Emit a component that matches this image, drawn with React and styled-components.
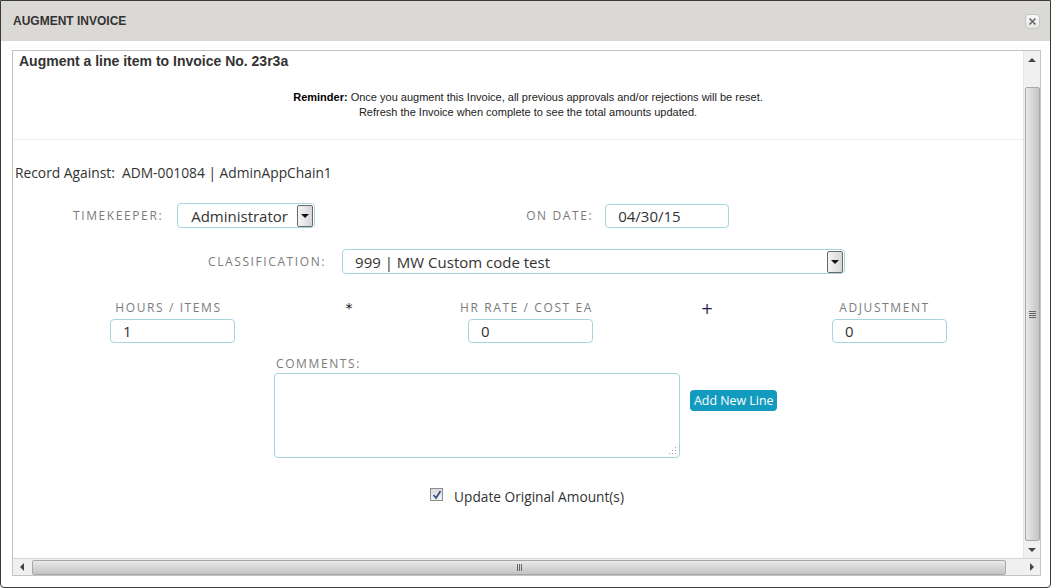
import React from 'react';
import styled, { createGlobalStyle } from 'styled-components';

const GlobalStyle = createGlobalStyle`
  html, body {
    margin: 0;
    padding: 0;
    background: #ffffff;
  }
  * {
    box-sizing: border-box;
  }
`;

const Dialog = styled.div`
  width: 1051px;
  height: 588px;
  border: 1px solid #3a3a3a;
  border-radius: 0 0 4px 4px;
  background: #fff;
  display: flex;
  flex-direction: column;
  overflow: hidden;
`;

const TitleBar = styled.header`
  height: 40px;
  flex-shrink: 0;
  background: #dbd9d5;
  display: flex;
  align-items: center;
  justify-content: space-between;
  padding: 0 10px 0 12px;
`;

const Title = styled.h2`
  margin: 0;
  font-family: "Liberation Sans", Arial, sans-serif;
  font-size: 12px;
  font-weight: bold;
  color: #333;
`;

const CloseButton = styled.button`
  width: 15px;
  height: 15px;
  padding: 0;
  border: 1px solid #c4c4c4;
  border-radius: 4px;
  background: linear-gradient(#fafafa, #e6e6e6);
  display: flex;
  align-items: center;
  justify-content: center;
`;

const Body = styled.div`
  flex: 1;
  padding: 9px 9px 11px 11px;
  display: flex;
`;

const ScrollPanel = styled.div`
  flex: 1;
  border: 1px solid #c9c1c1;
  display: grid;
  grid-template-columns: 1fr 17px;
  grid-template-rows: 1fr 17px;
  overflow: hidden;
`;

const Viewport = styled.div`
  overflow: hidden;
  position: relative;
`;

const Content = styled.div`
  width: 1030px;
`;

const Heading = styled.div`
  padding: 2px 0 0 6px;
  font-family: "Liberation Sans", Arial, sans-serif;
  font-size: 14px;
  font-weight: bold;
  line-height: 16px;
  color: #333;
`;

const Reminder = styled.div`
  margin-top: 21px;
  padding-bottom: 19px;
  border-bottom: 1px solid #ececec;
  text-align: center;
  font-family: "Liberation Sans", Arial, sans-serif;
  font-size: 11px;
  line-height: 15px;
  color: #222;
  b {
    color: #000;
  }
`;

const Form = styled.div`
  font-family: "Open Sans", sans-serif;
  color: #333;
`;

const RecordLine = styled.div`
  margin-top: 24px;
  padding-left: 2px;
  font-size: 13.8px;
  line-height: 18px;
`;

const Row = styled.div`
  display: flex;
  align-items: center;
  margin-top: ${p => p.$top || 21}px;
  padding-left: ${p => p.$left || 0}px;
`;

const Label = styled.label`
  font-size: 12px;
  letter-spacing: 1.6px;
  text-transform: uppercase;
  color: #7b7b7b;
  line-height: 16px;
  margin-right: ${p => p.$gap || 0}px;
`;

const SelectBox = styled.div`
  width: ${p => p.$width}px;
  height: 25px;
  border: 1px solid #a7d4df;
  border-radius: 4px;
  display: flex;
  align-items: center;
  justify-content: space-between;
  padding: 0 1px 0 ${p => p.$pad || 13}px;
  font-size: 15px;
  color: #333;
`;

const DropButton = styled.span`
  width: 16px;
  height: 22px;
  border: 1px solid #6a6a6a;
  border-radius: 2px;
  background: linear-gradient(90deg, #f4f4f4, #d6d6d6);
  display: flex;
  align-items: center;
  justify-content: center;
  &::after {
    content: '';
    border-left: 4px solid transparent;
    border-right: 4px solid transparent;
    border-top: 4px solid #111;
  }
`;

const TextInput = styled.div`
  width: ${p => p.$width}px;
  height: ${p => p.$height || 24}px;
  margin-left: ${p => p.$shift || 0}px;
  border: 1px solid #a7d4df;
  border-radius: 4px;
  padding: 0 12px;
  display: flex;
  align-items: center;
  font-size: 15px;
  color: #333;
`;

const Spacer = styled.div`
  width: ${p => p.$width}px;
`;

const AmountGrid = styled.div`
  display: grid;
  grid-template-columns: repeat(5, 179px);
  margin-top: 26px;
  padding-left: 66px;
`;

const AmountCell = styled.div`
  display: flex;
  flex-direction: column;
  align-items: center;
  gap: 3px;
`;

const Operator = styled.div`
  text-align: center;
  font-family: "DejaVu Sans", sans-serif;
  font-size: ${p => p.$size || 14}px;
  line-height: 16px;
  padding-top: ${p => p.$top || 0}px;
  padding-left: 3px;
  color: #${p => p.$color || '111'};
`;

const CommentBlock = styled.div`
  display: flex;
  flex-direction: column;
  gap: 1px;
`;

const CommentArea = styled.div`
  width: 406px;
  height: 85px;
  border: 1px solid #a7d4df;
  border-radius: 4px;
  position: relative;
`;

const ResizeGrip = styled.svg`
  position: absolute;
  right: 2px;
  bottom: 2px;
`;

const AddButton = styled.button`
  margin: 34px 0 0 10px;
  align-self: flex-start;
  height: 21px;
  padding: 0 4px;
  border: none;
  border-radius: 4px;
  background: #139bbf;
  color: #fff;
  font-family: "Open Sans", sans-serif;
  font-size: 12.4px;
  line-height: 21px;
`;

const CheckRow = styled.div`
  display: flex;
  align-items: center;
  justify-content: center;
  margin-top: 30px;
  padding-right: 2px;
  gap: 11px;
  font-size: 13.7px;
  line-height: 18px;
`;

const CheckBox = styled.span`
  width: 13px;
  height: 13px;
  margin-top: -5px;
  border: 1px solid #8d8d8d;
  background: linear-gradient(#dcdcdc, #f4f4f4);
  display: flex;
  align-items: center;
  justify-content: center;
`;

const VScroll = styled.div`
  background: #f0f0f0;
  border-left: 1px solid #e6e6e6;
  display: flex;
  flex-direction: column;
  align-items: center;
`;

const HScroll = styled.div`
  grid-column: 1 / 3;
  background: #f0f0f0;
  border-top: 1px solid #d6d6d6;
  display: flex;
  align-items: center;
`;

const Arrow = styled.span`
  width: 17px;
  height: 17px;
  flex-shrink: 0;
  display: flex;
  align-items: center;
  justify-content: center;
  &::after {
    content: '';
    ${p => p.$dir === 'up' && 'border-left: 4px solid transparent; border-right: 4px solid transparent; border-bottom: 4px solid #444;'}
    ${p => p.$dir === 'down' && 'border-left: 4px solid transparent; border-right: 4px solid transparent; border-top: 4px solid #444;'}
    ${p => p.$dir === 'left' && 'border-top: 4px solid transparent; border-bottom: 4px solid transparent; border-right: 4px solid #444;'}
    ${p => p.$dir === 'right' && 'border-top: 4px solid transparent; border-bottom: 4px solid transparent; border-left: 4px solid #444;'}
  }
`;

const VThumb = styled.div`
  width: 15px;
  margin-top: 19px;
  flex: 1;
  border: 1px solid #a8a8a8;
  border-radius: 2px;
  background: linear-gradient(90deg, #eaeaea, #d2d2d2 60%, #c4c4c4);
  display: flex;
  align-items: center;
  justify-content: center;
`;

const HThumb = styled.div`
  height: 15px;
  flex: 1;
  margin: 0 17px 0 2px;
  border: 1px solid #a8a8a8;
  border-radius: 2px;
  background: linear-gradient(#eaeaea, #d2d2d2 60%, #c4c4c4);
  display: flex;
  align-items: center;
  justify-content: center;
`;

const Grip = styled.span`
  display: flex;
  flex-direction: ${p => (p.$vertical ? 'column' : 'row')};
  gap: 1px;
  span {
    background: #666;
    ${p => (p.$vertical ? 'width: 7px; height: 1px;' : 'width: 1px; height: 7px;')}
  }
`;

function App() {
  return (
    <>
      <GlobalStyle />
      <Dialog>
        <TitleBar>
          <Title>AUGMENT INVOICE</Title>
          <CloseButton aria-label="close">
            <svg width="9" height="9" viewBox="0 0 9 9">
              <path d="M1.5 1.5 L7.5 7.5 M7.5 1.5 L1.5 7.5" stroke="#666" strokeWidth="1.6" />
            </svg>
          </CloseButton>
        </TitleBar>
        <Body>
          <ScrollPanel>
            <Viewport>
              <Content>
                <Heading>Augment a line item to Invoice No. 23r3a</Heading>
                <Reminder>
                  <b>Reminder:</b> Once you augment this Invoice, all previous approvals and/or rejections will be reset.
                  <br />
                  Refresh the Invoice when complete to see the total amounts updated.
                </Reminder>
                <Form>
                  <RecordLine>Record Against:&nbsp; ADM-001084 | AdminAppChain1</RecordLine>
                  <Row $left={60}>
                    <Label $gap={14}>Timekeeper:</Label>
                    <SelectBox $width={138}>
                      Administrator
                      <DropButton />
                    </SelectBox>
                    <Spacer $width={211} />
                    <Label $gap={12}>On Date:</Label>
                    <TextInput $width={124}>04/30/15</TextInput>
                  </Row>
                  <Row $left={195}>
                    <Label $gap={16}>Classification:</Label>
                    <SelectBox $width={503} $pad={12}>
                      999 | MW Custom code test
                      <DropButton />
                    </SelectBox>
                  </Row>
                  <AmountGrid>
                    <AmountCell>
                      <Label>Hours / Items</Label>
                      <TextInput $width={125} $shift={8}>1</TextInput>
                    </AmountCell>
                    <Operator>*</Operator>
                    <AmountCell>
                      <Label>Hr Rate / Cost EA</Label>
                      <TextInput $width={125} $shift={8}>0</TextInput>
                    </AmountCell>
                    <Operator $top={1} $size={15} $color="2a1a4a">+</Operator>
                    <AmountCell>
                      <Label>Adjustment</Label>
                      <TextInput $width={115} $shift={10}>0</TextInput>
                    </AmountCell>
                  </AmountGrid>
                  <Row $top={13} $left={261}>
                    <CommentBlock>
                      <Label style={{ paddingLeft: 2 }}>Comments:</Label>
                      <CommentArea>
                        <ResizeGrip width="9" height="9" viewBox="0 0 9 9">
                          <g fill="#a0a0a0">
                            <rect x="7" y="1" width="1" height="1" />
                            <rect x="4" y="4" width="1" height="1" />
                            <rect x="7" y="4" width="1" height="1" />
                            <rect x="1" y="7" width="1" height="1" />
                            <rect x="4" y="7" width="1" height="1" />
                            <rect x="7" y="7" width="1" height="1" />
                          </g>
                        </ResizeGrip>
                      </CommentArea>
                    </CommentBlock>
                    <AddButton>Add New Line</AddButton>
                  </Row>
                  <CheckRow>
                    <CheckBox>
                      <svg width="10" height="10" viewBox="0 0 10 10">
                        <path d="M1.5 5 L4 8 L8.5 1" stroke="#3e4f8f" strokeWidth="1.8" fill="none" />
                      </svg>
                    </CheckBox>
                    Update Original Amount(s)
                  </CheckRow>
                </Form>
              </Content>
            </Viewport>
            <VScroll>
              <Arrow $dir="up" />
              <VThumb>
                <Grip $vertical>
                  <span />
                  <span />
                  <span />
                  <span />
                </Grip>
              </VThumb>
              <Arrow $dir="down" />
            </VScroll>
            <HScroll>
              <Arrow $dir="left" />
              <HThumb>
                <Grip>
                  <span />
                  <span />
                  <span />
                </Grip>
              </HThumb>
              <Arrow $dir="right" />
            </HScroll>
          </ScrollPanel>
        </Body>
      </Dialog>
    </>
  );
}

export default App;
